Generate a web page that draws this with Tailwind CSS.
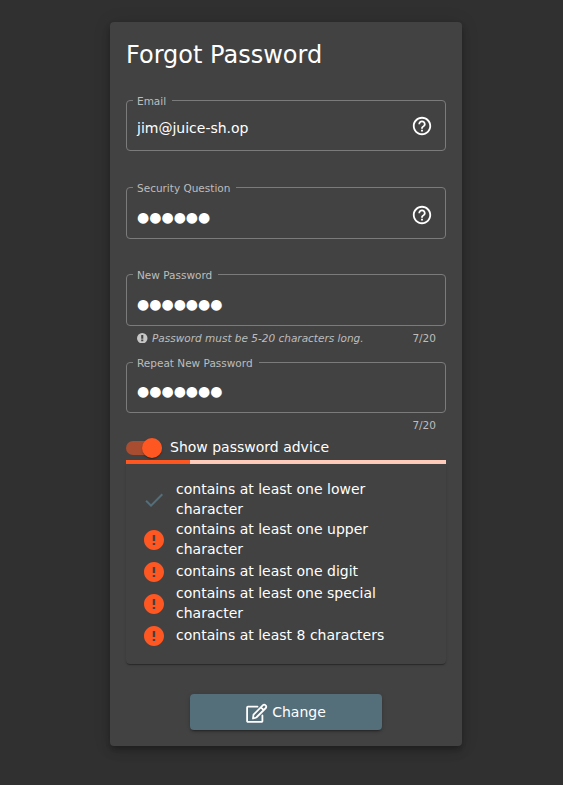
<!DOCTYPE html>
<html lang="en">
<head>
<meta charset="utf-8">
<title>Forgot Password</title>
<script src="https://cdn.jsdelivr.net/npm/@tailwindcss/browser@4"></script>
</head>
<body class="min-h-screen bg-[#303030] font-['DejaVu_Sans',sans-serif] text-[14px] leading-5 text-white">
<svg class="hidden">
  <symbol id="help" viewBox="0 0 24 24"><path fill="currentColor" d="M11 18h2v-2h-2v2zm1-16C6.480 2 2 6.480 2 12s4.480 10 10 10 10-4.480 10-10S17.520 2 12 2zm0 18c-4.410 0-8-3.590-8-8s3.590-8 8-8 8 3.590 8 8-3.590 8-8 8zm0-14c-2.210 0-4 1.790-4 4h2c0-1.100.9-2 2-2s2 .9 2 2c0 2-3 1.750-3 5h2c0-2.250 3-2.500 3-5 0-2.210-1.790-4-4-4z"/></symbol>
  <symbol id="error" viewBox="0 0 24 24"><path fill="currentColor" d="M12 2C6.480 2 2 6.480 2 12s4.480 10 10 10 10-4.480 10-10S17.520 2 12 2zm1.200 15h-2.400v-2h2.400v2zm0-4h-2.400V7h2.400v6z"/></symbol>
</svg>
<div class="pt-[22px]">
  <main class="ml-[110px] flex h-[724px] w-[352px] flex-col rounded-[4px] bg-[#424242] px-4 shadow-[0_3px_5px_-1px_rgba(0,0,0,0.2),0_6px_10px_0_rgba(0,0,0,0.14),0_1px_18px_0_rgba(0,0,0,0.12)]">
    <h1 class="mt-[17px] h-[56px] text-[24px] leading-8">Forgot Password</h1>

    <fieldset class="h-[56px] shrink-0 rounded-[4px] border border-[#7b7b7b] pr-3 pl-[6px]">
      <legend class="h-[11px] pr-[6px] pl-1 text-[10.5px] leading-[12px] text-[#bdbdbd]">Email</legend>
      <div class="flex h-[34px] items-center justify-between pt-[9px] pl-1"><span>jim@juice-sh.op</span><svg class="mb-[3px] size-[22px]"><use href="#help"/></svg></div>
    </fieldset>

    <fieldset class="mt-[31px] h-[57px] shrink-0 rounded-[4px] border border-[#7b7b7b] pr-3 pl-[6px]">
      <legend class="h-[11px] pr-[6px] pl-1 text-[10.5px] leading-[12px] text-[#bdbdbd]">Security Question</legend>
      <div class="flex h-[36px] items-center justify-between pt-[9px] pl-1"><span class="pt-[3px]">●●●●●●</span><svg class="mb-[2px] size-[22px]"><use href="#help"/></svg></div>
    </fieldset>

    <fieldset class="mt-[30px] h-[57px] shrink-0 rounded-[4px] border border-[#7b7b7b] pr-3 pl-[6px]">
      <legend class="h-[11px] pr-[6px] pl-1 text-[10.5px] leading-[12px] text-[#bdbdbd]">New Password</legend>
      <div class="flex h-[36px] items-center pt-[9px] pl-1"><span class="pt-[3px]">●●●●●●●</span></div>
    </fieldset>
    <div class="flex h-[31px] shrink-0 items-start justify-between pt-[2px] pr-[10px] pl-[11px] text-[10.5px] text-[#bdbdbd]">
      <span class="flex items-center gap-[4.5px]"><svg class="size-[10.5px] text-[#c6c6c6]" viewBox="2 2 20 20"><path fill="currentColor" d="M12 2a10 10 0 1 0 0 20 10 10 0 0 0 0-20zm2 15.500h-4v-3h4v3zm0-4.500h-4V6h4v7z"/></svg><em>Password must be 5-20 characters long.</em></span><span>7/20</span>
    </div>

    <fieldset class="h-[56px] shrink-0 rounded-[4px] border border-[#7b7b7b] pr-3 pl-[6px]">
      <legend class="h-[11px] pr-[6px] pl-1 text-[10.5px] leading-[12px] text-[#bdbdbd]">Repeat New Password</legend>
      <div class="flex h-[34px] items-center pt-[9px] pl-1"><span class="pt-[2px]">●●●●●●●</span></div>
    </fieldset>
    <div class="h-[24px] shrink-0 pt-[2px] pr-[10px] text-right text-[10.5px] text-[#bdbdbd]">7/20</div>

    <label class="flex h-[23px] shrink-0 items-center gap-2">
      <span class="mt-[-1px] flex h-[14px] w-9 items-center justify-end rounded-full bg-[#a94d30]"><span class="size-5 shrink-0 rounded-full bg-[#ff5722] shadow-[0_2px_1px_-1px_rgba(0,0,0,0.2),0_1px_1px_0_rgba(0,0,0,0.14),0_1px_3px_0_rgba(0,0,0,0.12)]"></span></span>
      <span class="mt-[-3px]">Show password advice</span>
    </label>
    <div class="h-1 shrink-0 bg-[#ffccbc]"><div class="h-full w-1/5 bg-[#ff5722]"></div></div>
    <ul class="h-[200px] shrink-0 rounded-b-[4px] px-4 pt-[15px] shadow-[0_2px_1px_-1px_rgba(0,0,0,0.2),0_1px_1px_0_rgba(0,0,0,0.14),0_1px_3px_0_rgba(0,0,0,0.12)]">
      <li class="flex h-10 items-center gap-[10px]"><svg class="mt-[2px] size-6 shrink-0 text-[#546e7a]" viewBox="0 0 24 24"><path fill="currentColor" d="M9 16.170 4.830 12l-1.420 1.410L9 19 21 7l-1.410-1.410z"/></svg><span>contains at least one lower<br>character</span></li>
      <li class="flex h-10 items-center gap-[10px]"><svg class="mt-[2px] size-6 shrink-0 text-[#ff5722]"><use href="#error"/></svg><span>contains at least one upper<br>character</span></li>
      <li class="flex h-6 items-center gap-[10px]"><svg class="mt-[2px] size-6 shrink-0 text-[#ff5722]"><use href="#error"/></svg><span>contains at least one digit</span></li>
      <li class="flex h-10 items-center gap-[10px]"><svg class="mt-[2px] size-6 shrink-0 text-[#ff5722]"><use href="#error"/></svg><span>contains at least one special<br>character</span></li>
      <li class="flex h-6 items-center gap-[10px]"><svg class="mt-[2px] size-6 shrink-0 text-[#ff5722]"><use href="#error"/></svg><span>contains at least 8 characters</span></li>
    </ul>

    <button class="mt-[30px] ml-16 flex h-9 w-48 shrink-0 items-center justify-center gap-1 rounded-[4px] bg-[#546e7a] shadow-[0_3px_1px_-2px_rgba(0,0,0,0.2),0_2px_2px_0_rgba(0,0,0,0.14),0_1px_5px_0_rgba(0,0,0,0.12)]">
      <svg class="mt-[2px] size-[22px] overflow-visible" viewBox="-0.500 0 22 22" fill="none" stroke="currentColor" stroke-width="1.800" stroke-linejoin="round" stroke-linecap="round"><path d="M11 4.700H1.400a.8.800 0 0 0-.8.800v13.500a.8.800 0 0 0 .8.800h13.700a.8.800 0 0 0 .8-.8V13.500"/><path d="m6.500 16.500.5-3.800L16.500 3.200a1.600 1.600 0 0 1 2.300 0l.5.500a1.600 1.600 0 0 1 0 2.300l-9.500 9.500zM14.400 5.300l2.800 2.800"/></svg>
      <span>Change</span>
    </button>
  </main>
</div>
</body>
</html>
